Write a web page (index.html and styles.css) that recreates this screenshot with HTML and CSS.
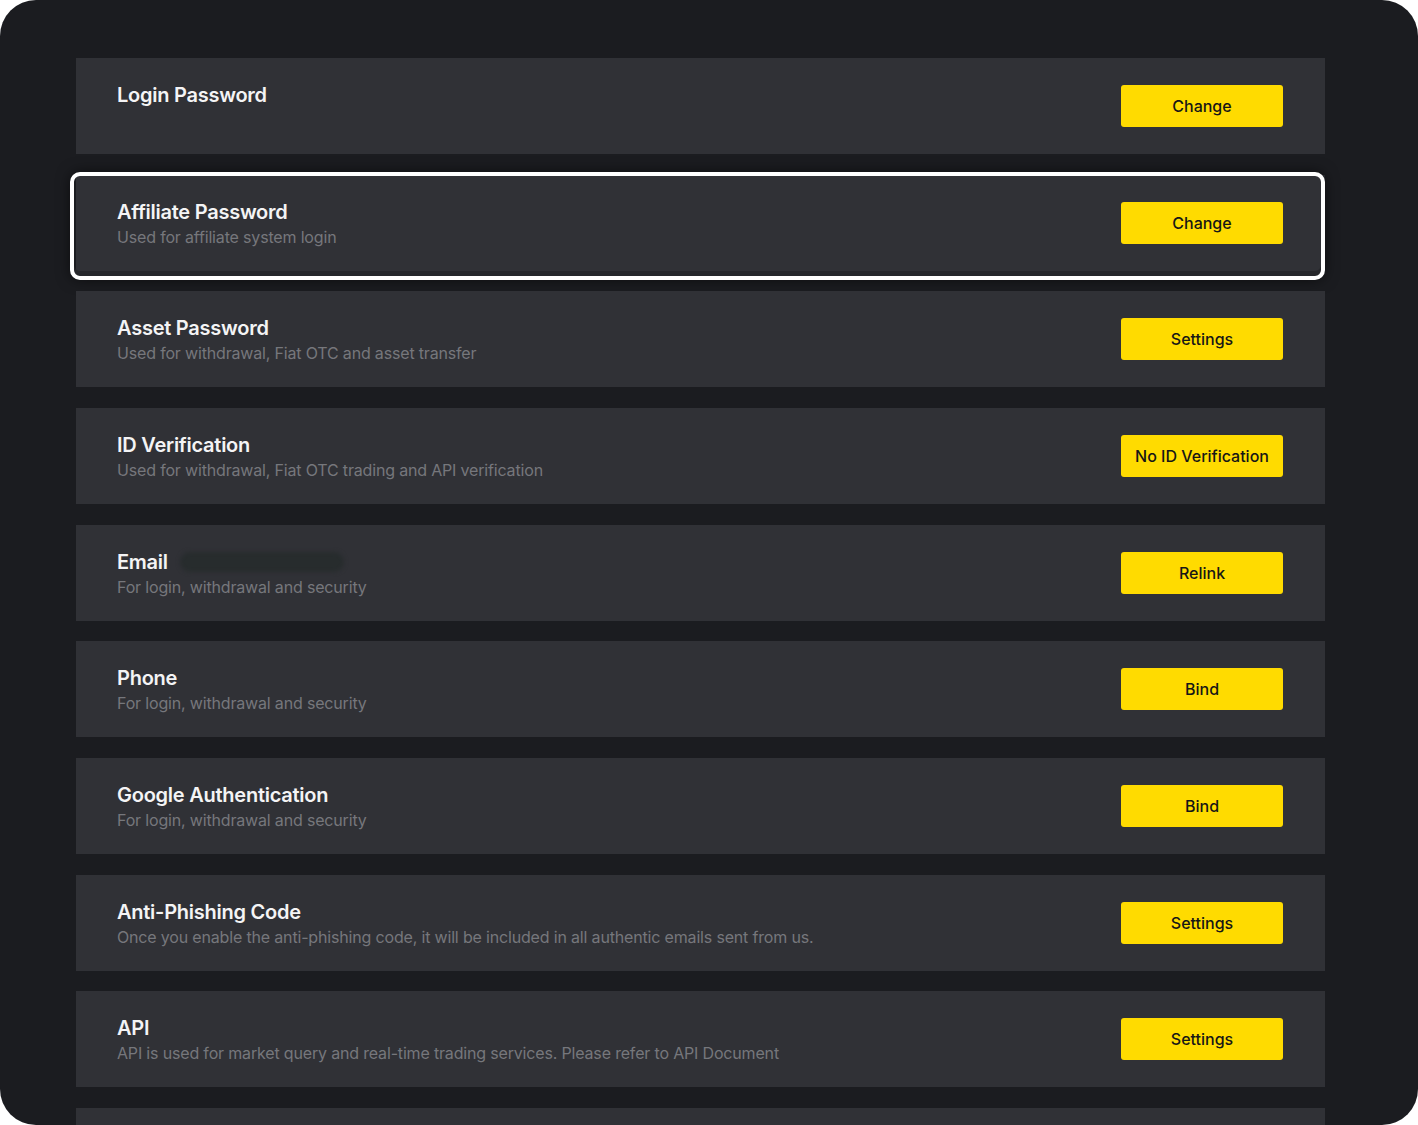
FILE: index.html
```html
<!DOCTYPE html>
<html lang="en">
<head>
    <meta charset="UTF-8">
    <meta name="viewport" content="width=device-width, initial-scale=1.0">
    <title>Security Settings</title>
    <link rel="stylesheet" href="styles.css">
</head>
<body>
    <div class="frame">
        <div class="security-list">
            <div class="card">
                <div class="info">
                    <h3>Login Password</h3>
                </div>
                <button class="action-btn">Change</button>
            </div>

            <div class="card focus">
                <div class="info">
                    <h3>Affiliate Password</h3>
                    <p>Used for affiliate system login</p>
                </div>
                <button class="action-btn">Change</button>
            </div>

            <div class="card">
                <div class="info">
                    <h3>Asset Password</h3>
                    <p>Used for withdrawal, Fiat OTC and asset transfer</p>
                </div>
                <button class="action-btn">Settings</button>
            </div>

            <div class="card">
                <div class="info">
                    <h3>ID Verification</h3>
                    <p>Used for withdrawal, Fiat OTC trading and API verification</p>
                </div>
                <button class="action-btn">No ID Verification</button>
            </div>

            <div class="card">
                <div class="info">
                    <h3>Email <span class="masked"></span></h3>
                    <p>For login, withdrawal and security</p>
                </div>
                <button class="action-btn">Relink</button>
            </div>

            <div class="card">
                <div class="info">
                    <h3>Phone</h3>
                    <p>For login, withdrawal and security</p>
                </div>
                <button class="action-btn">Bind</button>
            </div>

            <div class="card">
                <div class="info">
                    <h3>Google Authentication</h3>
                    <p>For login, withdrawal and security</p>
                </div>
                <button class="action-btn">Bind</button>
            </div>

            <div class="card">
                <div class="info">
                    <h3>Anti-Phishing Code</h3>
                    <p>Once you enable the anti-phishing code, it will be included in all authentic emails sent from us.</p>
                </div>
                <button class="action-btn">Settings</button>
            </div>

            <div class="card">
                <div class="info">
                    <h3>API</h3>
                    <p>API is used for market query and real-time trading services. Please refer to API Document</p>
                </div>
                <button class="action-btn">Settings</button>
            </div>

            <!-- next row, cut off by the frame -->
            <div class="card"></div>
        </div>
    </div>
</body>
</html>
```

FILE: styles.css
```css
* {
    margin: 0;
    padding: 0;
    box-sizing: border-box;
}

body {
    font-family: 'Inter', 'Liberation Sans', sans-serif;
    background-color: #ffffff;
}

.frame {
    width: 1418px;
    height: 1125px;
    background-color: #1b1c20;
    border-radius: 36px;
    overflow: hidden;
    padding: 58px 93px 0 76px;
}

.security-list {
    display: flex;
    flex-direction: column;
    gap: 20.67px;
}

.card {
    position: relative;
    display: flex;
    justify-content: space-between;
    align-items: center;
    height: 96px;
    flex-shrink: 0;
    padding: 0 42px 0 41px;
    background-color: #303136;
}

.info {
    align-self: flex-start;
    padding-top: 25px;
}

.info h3 {
    font-size: 20px;
    line-height: 24px;
    font-weight: 600;
    letter-spacing: -0.25px;
    color: #f4f4f5;
    display: flex;
    align-items: center;
}

.info p {
    margin-top: 2px;
    font-size: 16px;
    line-height: 22px;
    letter-spacing: -0.17px;
    color: #76777c;
}

/* blurred-out email address */
.masked {
    display: inline-block;
    width: 164px;
    height: 20px;
    margin-left: 12px;
    border-radius: 12px;
    background-color: #272c2d;
    filter: blur(2px);
}

.action-btn {
    width: 162px;
    height: 42px;
    border: none;
    border-radius: 3px;
    background-color: #ffdb00;
    color: #161616;
    font-family: inherit;
    font-size: 16px;
    font-weight: 500;
    cursor: pointer;
}

.action-btn:hover {
    background-color: #f0cf00;
}

/* tour highlight around the active row */
.focus::after {
    content: "";
    position: absolute;
    top: -3px;
    left: -6px;
    right: 0;
    bottom: -9px;
    border: 4px solid #ffffff;
    border-radius: 10px;
    box-shadow: 0 0 14px rgba(0, 0, 0, 0.55), inset 0 -5px 0 #26272b;
    pointer-events: none;
}
```
